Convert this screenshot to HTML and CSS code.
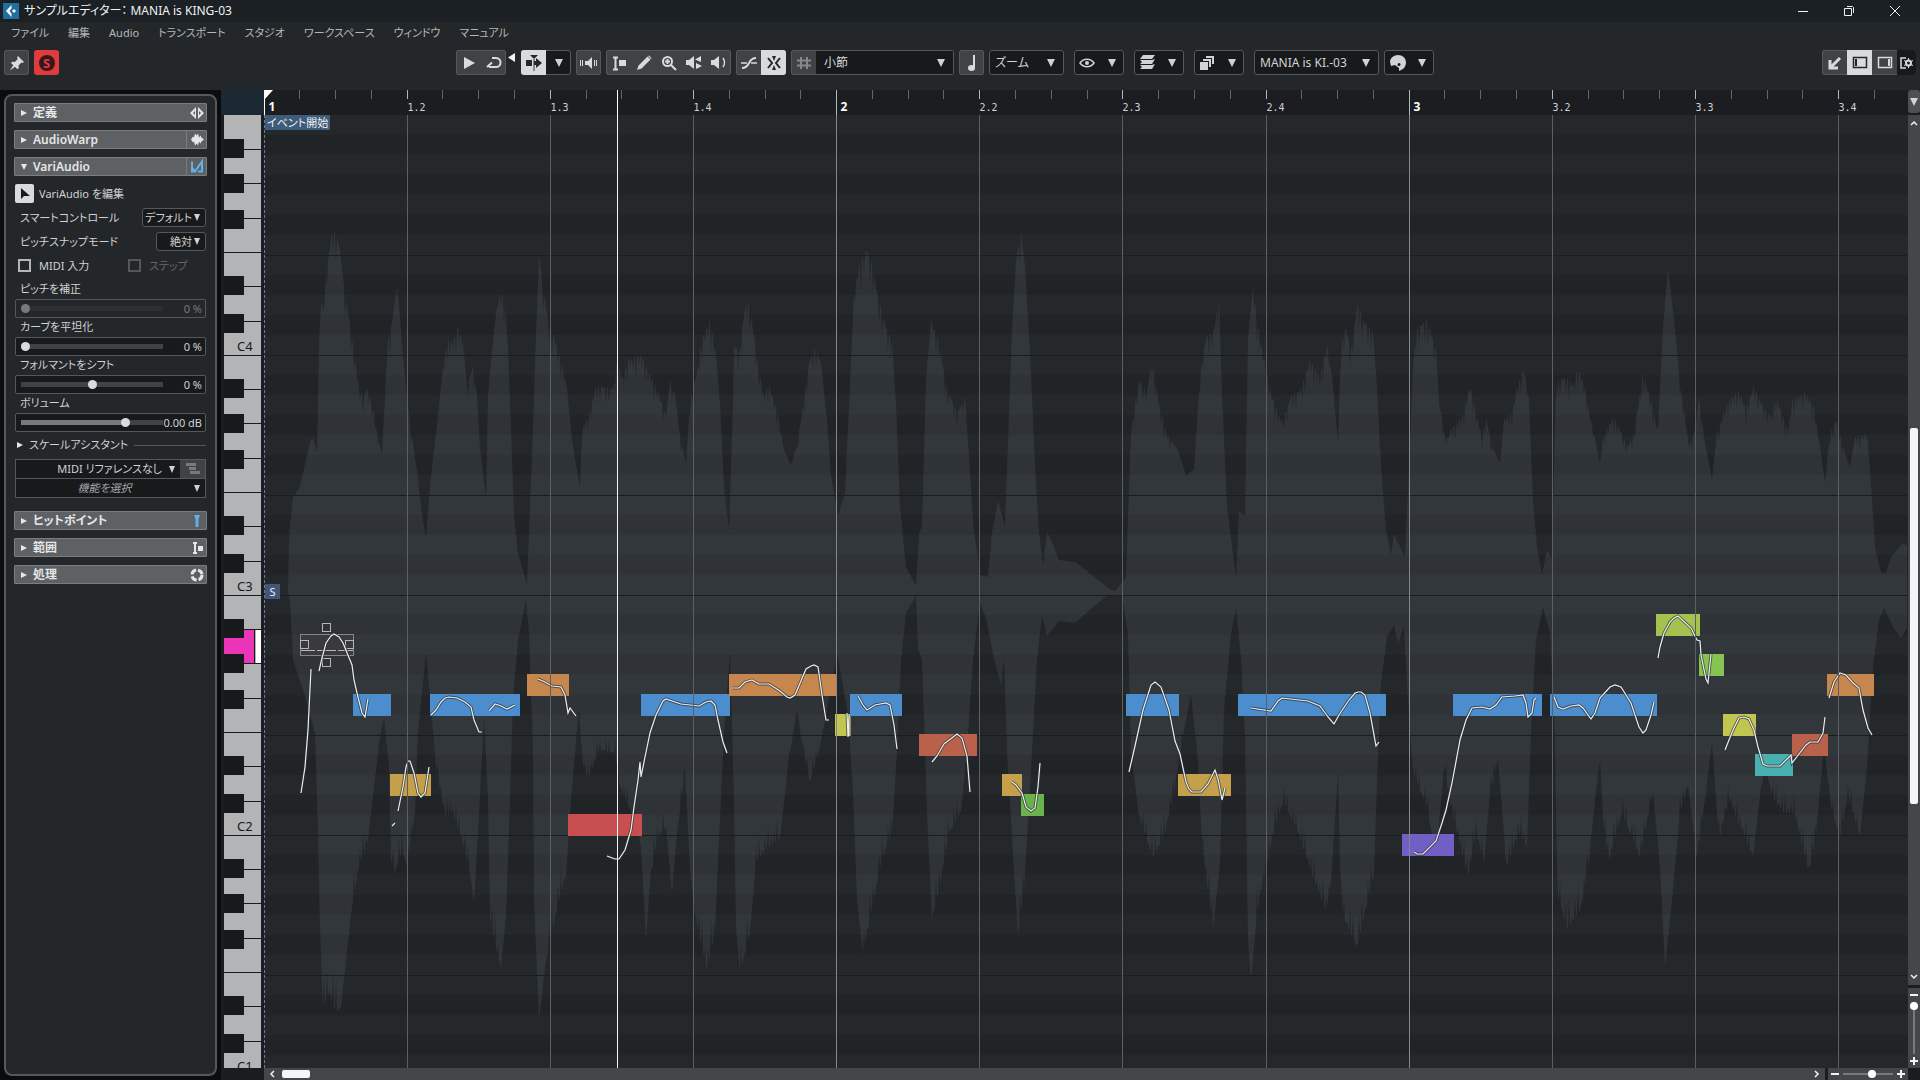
FILE: index.html
```html
<!DOCTYPE html>
<html lang="ja">
<head>
    <meta charset="UTF-8">
    <title>サンプルエディター： MANIA is KING-03</title>
    <link rel="stylesheet" href="styles.css">
</head>
<body>
    <header class="titlebar">
        <svg class="app-icon" width="16" height="16" viewBox="0 0 16 16"><rect width="16" height="16" fill="#1f6f9f"/><path d="M8.500 2 3 8l5.500 6V10.500L6.500 8l2-2.500z" fill="#fff"/><path d="m11 6 2 2-2 2-2-2z" fill="#fff"/></svg>
        <h1>サンプルエディター： MANIA is KING-03</h1>
        <div class="window-buttons">
            <button aria-label="最小化"><svg width="12" height="12"><path d="M1 6.500h10"/></svg></button>
            <button aria-label="元に戻す"><svg width="12" height="12"><path d="M1.500 3.500h7v7h-7zM4 1.500h5.500l1 1V8"/></svg></button>
            <button aria-label="閉じる"><svg width="12" height="12"><path d="m1 1 10 10M11 1 1 11"/></svg></button>
        </div>
    </header>

    <nav class="menubar">
        <a href="#">ファイル</a>
        <a href="#">編集</a>
        <a href="#">Audio</a>
        <a href="#">トランスポート</a>
        <a href="#">スタジオ</a>
        <a href="#">ワークスペース</a>
        <a href="#">ウィンドウ</a>
        <a href="#">マニュアル</a>
    </nav>

    <div class="toolbar">
        <div class="tools-left">
            <div class="group"><button aria-label="ピン"><svg width="16" height="16" viewBox="0 0 16 16"><path d="m9 1 6 6-1.500 1-1-.5-3 3 .3 2.500-1.300 1.300L2 8l1.200-1.300 2.600.3 3-3L8 2.500zM5 9l2 2-6 4.500z"/></svg></button></div>
            <button class="solo" aria-label="ソロ"><span>S</span></button>
        </div>
        <div class="tools-center">
            <div class="group">
                <button aria-label="再生"><svg width="16" height="16" viewBox="0 0 16 16"><path d="M3 2v12l11-6z"/></svg></button>
                <button aria-label="ループ"><svg width="16" height="16" viewBox="0 0 16 16"><path class="line" d="M6 3h4a4.500 4.500 0 0 1 0 9H3M1 12l5-4.500"/></svg></button>
            </div>
            <svg class="divider-arrow" width="15" height="25"><path d="M9 3v9L2 7.500z"/></svg>
            <div class="group combo-group">
                <button class="on" aria-label="オートスクロール"><svg width="16" height="16" viewBox="0 0 16 16"><path d="M0 5h6v6H0zM10 6V3l6 5-6 5v-3H8V6zM4 0h8L9 3H7z"/><path class="line thin" d="M8 3v13" stroke-opacity=".6"/></svg></button>
                <button class="caret" aria-label="オートスクロール設定"></button>
            </div>
            <div class="group mr5"><button aria-label="試聴"><svg width="22" height="16" viewBox="0 0 22 16"><path d="M7 6h3l4-4v12l-4-4H7z"/><path class="line hair" d="M2.500 5v6M4.500 5v6M16.500 5v6M18.500 5v6"/></svg></button></div>
            <div class="group mr5">
                <button aria-label="範囲選択"><svg width="16" height="16" viewBox="0 0 16 16"><path class="line" d="M2 2.500h5M2 14.500h5M4.500 2v12"/><path d="M8 5h7v6H8z"/></svg></button>
                <button aria-label="描画"><svg width="16" height="16" viewBox="0 0 16 16"><path d="m1 15 1.500-4.500L11.500 1.500l3 3-9 9zM12 1l1-.5 2.500 2.500-.5 1z"/></svg></button>
                <button aria-label="ズーム"><svg width="16" height="16" viewBox="0 0 16 16"><circle class="line" cx="6.500" cy="6.500" r="4.500"/><path class="line" d="M4 6.500h5M6.500 4v5M10 10l5 5"/></svg></button>
                <button aria-label="スクラブ"><svg width="16" height="16" viewBox="0 0 16 16"><path d="M0 5h3l5-4v13l-5-4H0zM15 1v6L9 4.500zM10 8v6l6-3z"/></svg></button>
                <button aria-label="再生ツール"><svg width="16" height="16" viewBox="0 0 16 16"><path d="M0 5h3l5-4v13l-5-4H0z"/><path class="line thin" d="M12 3q3 4.500 0 9"/></svg></button>
            </div>
            <div class="group mr5">
                <button aria-label="ゼロクロス"><svg width="18" height="16" viewBox="0 0 18 16"><path class="line" d="M2 13c9 0 5-10 14-10"/><path class="line thin" d="M1 8h6M11 8h6"/></svg></button>
                <button class="on" aria-label="スナップ"><svg width="16" height="16" viewBox="0 0 16 16"><path class="line" d="m2 3 4 5-4 5M14 3l-4 5 4 5"/><path d="M6 1h4L8 6zM6 15h4l-2-5z"/></svg></button>
            </div>
            <div class="group grid-group mr5">
                <button class="dim" aria-label="グリッド"><svg width="16" height="16" viewBox="0 0 16 16"><path class="line" d="M5 2v12M11 2v12M1 5.500h14M1 10.500h14"/></svg></button>
                <label class="combo"><select aria-label="グリッドの種類"><option>小節</option></select></label>
            </div>
            <div class="group mr5"><button aria-label="クオンタイズ"><svg width="16" height="16" viewBox="0 0 16 16"><path class="line" d="M10 0v13"/><ellipse cx="7.500" cy="13" rx="3.500" ry="3"/></svg></button></div>
            <label class="combo boxed zoom-combo"><select aria-label="クオンタイズ値"><option>ズーム</option></select></label>
            <button class="boxed icon-combo caret" aria-label="表示"><svg width="16" height="16" viewBox="0 0 16 16"><path class="line thin" d="M1 8c3.500-5 10.500-5 14 0-3.500 5-10.500 5-14 0z"/><circle cx="8" cy="8" r="2"/></svg></button>
            <button class="boxed icon-combo caret" aria-label="レイヤー"><svg width="16" height="16" viewBox="0 0 16 16"><path d="M4 0h12l-3 4H1zM1 5h12l3-1-3 5H1l2-2zM1 10h12l3-1-3 5H1l2-2z"/></svg></button>
            <button class="boxed icon-combo caret" aria-label="クリップ"><svg width="16" height="16" viewBox="0 0 16 16"><path d="M1 7h8v8H1zM4 6V4h8v8h-2V6zM7 3V1h8v8h-2V3z"/></svg></button>
            <label class="combo boxed clip-combo"><select aria-label="編集中のクリップ"><option>MANIA is KI.-03</option></select></label>
            <button class="boxed icon-combo color-combo caret" aria-label="カラー"><svg width="18" height="18" viewBox="0 0 18 18"><path fill-rule="evenodd" d="M9 1a8 7 0 0 1 8 7c0 3-1 5-3 7l-4 2v-3l-4-3-4 1-1-4c0-4 4-7 8-7zm1 8a1.500 1.500 0 1 0 0 3 1.500 1.500 0 0 0 0-3z"/></svg></button>
        </div>
        <div class="group tools-right">
            <button aria-label="下ゾーン"><svg width="16" height="16" viewBox="0 0 16 16"><path class="line bold" d="M13 3 4 12M3 5v8h8"/></svg></button>
            <button class="on" aria-label="左ゾーン"><svg width="16" height="16" viewBox="0 0 16 16"><path class="line thin" d="M1.500 2.500h13v10h-13z"/><path d="M3 4h2v7H3z"/></svg></button>
            <button aria-label="右ゾーン"><svg width="16" height="16" viewBox="0 0 16 16"><path class="line thin" d="M1.500 2.500h13v10h-13z"/><path d="M11 4h2v7h-2z"/></svg></button>
            <button class="dark" aria-label="設定"><svg width="14" height="14" viewBox="0 0 14 14"><path class="line thin" d="M6 2H1v10h5"/><circle class="line" cx="8.500" cy="7" r="2.500"/><path class="line hair" d="M8.500 2v2M8.500 10v2M4 4.500l2 1M11 8.500l2 1M4 9.500l2-1M11 5.500l2-1"/></svg></button>
        </div>
    </div>

    <main class="workspace">
        <aside class="inspector">
            <div class="panel">
                <button class="section"><i class="tri"></i>定義<svg width="14" height="14" viewBox="0 0 14 14"><path d="M6 1v12L0 7zM8 1v12l6-6z"/><path d="M5 5v4L3 7zM9 5v4l2-2z" fill="#5d6163"/></svg></button>
                <button class="section split"><i class="tri"></i>AudioWarp<svg width="14" height="14" viewBox="0 0 14 14"><path d="M1 7l2-3 1 1 1-4 1.500 2L8 1l1 4 1.500-2 1 2L14 7l-2.500 2-1 2L9 9l-1 4-1.500-2L5 13 4 9l-1 1z"/></svg></button>
                <button class="section split open"><i class="tri"></i>VariAudio<svg class="blue" width="14" height="14" viewBox="0 0 14 14"><path class="line" d="M2 2v10h3L12 2v10H8"/><path d="M2 7v5h5z"/></svg></button>

                <div class="vari">
                    <div class="edit-row">
                        <button class="edit-btn" id="edit" aria-label="VariAudio を編集"><svg width="12" height="12"><path d="M2 0v11l3-3h6z"/></svg></button>
                        <label for="edit">VariAudio を編集</label>
                    </div>
                    <div class="field">
                        <label for="smart">スマートコントロール</label>
                        <span class="combo boxed"><select id="smart" class="w64"><option>デフォルト</option></select></span>
                    </div>
                    <div class="field">
                        <label for="snap">ピッチスナップモード</label>
                        <span class="combo boxed"><select id="snap" class="w50"><option>絶対</option></select></span>
                    </div>
                    <div class="checks">
                        <label><input type="checkbox">MIDI 入力</label>
                        <label class="off"><input type="checkbox" disabled>ステップ</label>
                    </div>

                    <label class="param off" for="pitch">ピッチを補正</label>
                    <div class="slider off"><input type="range" id="pitch" value="0" disabled><output>0 %</output></div>
                    <label class="param" for="curve">カーブを平坦化</label>
                    <div class="slider"><input type="range" id="curve" value="0"><output>0 %</output></div>
                    <label class="param" for="formant">フォルマントをシフト</label>
                    <div class="slider"><input type="range" id="formant" value="50"><output>0 %</output></div>
                    <label class="param" for="volume">ボリューム</label>
                    <div class="slider volume"><input type="range" id="volume" value="75"><output>0.00 dB</output></div>

                    <button class="scale-head"><i class="tri"></i>スケールアシスタント</button>
                    <div class="reference">
                        <label class="combo"><select aria-label="MIDI リファレンス"><option>MIDI リファレンスなし</option></select></label>
                        <button aria-label="リファレンスを表示"><svg width="14" height="12"><path d="M0 0h10v3H0zM3 4h7v3H3zM4 8h10v3H4z"/></svg></button>
                    </div>
                    <label class="combo function"><select aria-label="機能"><option>機能を選択</option></select></label>
                </div>

                <button class="section"><i class="tri"></i>ヒットポイント<svg class="blue" width="14" height="14" viewBox="0 0 14 14"><path d="M4 1h6L8.500 5v8h-3V5z"/></svg></button>
                <button class="section"><i class="tri"></i>範囲<svg width="14" height="14" viewBox="0 0 14 14"><path class="line" d="M3 2h4M3 12h4M5 2v10"/><path d="M8 5h5v5H8z"/></svg></button>
                <button class="section"><i class="tri"></i>処理<svg width="14" height="14" viewBox="0 0 14 14"><circle class="line bold dash" cx="7" cy="7" r="5"/></svg></button>
            </div>
        </aside>

        <section class="editor">
            <div class="corner"></div>
            <svg class="ruler" id="ruler"></svg>
            <button class="ruler-menu caret" aria-label="ルーラー表示"></button>

            <svg class="keyboard">
                <defs>
                    <g id="octave">
                        <path class="key-line" d="M0 34.500h37M0 68.500h37M0 103.500h37M0 137.500h37M0 171.500h37M0 206.500h37M0 240.500h37"/>
                        <path class="black-keys" d="M0 24h20v19H0zM0 59h20v19H0zM0 95h20v19H0zM0 161h20v19H0zM0 199h20v19H0z"/>
                    </g>
                </defs>
                <rect class="whites" width="37" height="100%"/>
                <path class="held" d="M0 515h30v33H0z"/>
                <path class="held-edge" d="M32 515h5v33h-5z"/>
                <path class="key-line" d="M30.500 515v33"/>
                <use href="#octave"/>
                <use href="#octave" y="240"/>
                <use href="#octave" y="480"/>
                <use href="#octave" y="720"/>
                <text x="13" y="236">C4</text>
                <text x="13" y="476">C3</text>
                <text x="13" y="716">C2</text>
                <text x="13" y="956">C1</text>
            </svg>

            <div class="canvas">
                <svg class="wave" id="wave"></svg>
                <span class="tag event-start">イベント開始</span>
                <span class="tag snap-point">S</span>
            </div>

            <div class="vscroll">
                <div class="bar">
                    <button aria-label="上へ"><svg width="8" height="6"><path d="m1 5 3-3 3 3"/></svg></button>
                    <div class="track"><div class="thumb"></div></div>
                    <button aria-label="下へ"><svg width="8" height="6"><path d="m1 1 3 3 3-3"/></svg></button>
                </div>
                <div class="zoom">
                    <button aria-label="縮小"><svg width="8" height="8"><path class="fat" d="M0 4h8"/></svg></button>
                    <input type="range" value="0" aria-label="縦ズーム">
                    <button aria-label="拡大"><svg width="8" height="8"><path class="fat" d="M0 4h8M4 0v8"/></svg></button>
                </div>
            </div>

            <div class="hscroll">
                <div class="bar">
                    <button aria-label="左へ"><svg width="6" height="8"><path d="M5 1 2 4l3 3"/></svg></button>
                    <div class="track"><div class="thumb"></div></div>
                    <button aria-label="右へ"><svg width="6" height="8"><path d="m1 1 3 3-3 3"/></svg></button>
                </div>
                <div class="zoom">
                    <button aria-label="縮小"><svg width="8" height="8"><path class="fat" d="M0 4h8"/></svg></button>
                    <input type="range" value="60" aria-label="横ズーム">
                    <button aria-label="拡大"><svg width="8" height="8"><path class="fat" d="M0 4h8M4 0v8"/></svg></button>
                </div>
            </div>
        </section>
    </main>

    <script src="editor.js"></script>
</body>
</html>
```
FILE: styles.css
```css
* {
    box-sizing: border-box;
}

body {
    margin: 0;
    height: 100vh;
    display: flex;
    flex-direction: column;
    overflow: hidden;
    background: #23272a;
    color: #d0d2d3;
    font-family: "Noto Sans", "Noto Sans CJK JP", sans-serif;
    font-size: 12px;
    line-height: 16px;
    font-feature-settings: "palt";
}

button, select, input {
    margin: 0;
    padding: 0;
    border: 0;
    background: none;
    color: inherit;
    font: inherit;
    font-feature-settings: inherit;
}

button {
    display: flex;
    align-items: center;
    justify-content: center;
}

svg {
    display: block;
    flex: none;
    fill: currentColor;
}

svg .line {
    fill: none;
    stroke: currentColor;
    stroke-width: 2;
}

svg .hair { stroke-width: 1; }
svg .thin { stroke-width: 1.5; }
svg .bold { stroke-width: 3; }
svg .dash { stroke-dasharray: 6 2; }

/* title + menu */
.titlebar {
    display: flex;
    align-items: center;
    height: 22px;
    padding-left: 3px;
    background: #1a2023;
    color: #f0f2f3;
}

.titlebar h1 {
    flex: 1;
    margin: 0 0 0 5px;
    font-size: 12px;
    font-weight: 400;
}

.window-buttons {
    display: flex;
    padding-right: 2px;
}

.window-buttons button {
    width: 46px;
    height: 20px;
}

.window-buttons svg {
    fill: none;
    stroke: #f0f2f3;
}

.menubar {
    display: flex;
    align-items: center;
    gap: 19px;
    height: 22px;
    padding-left: 11px;
}

.menubar a {
    color: #b4b7b9;
    font-size: 11px;
    text-decoration: none;
}

/* toolbar */
.toolbar {
    display: flex;
    justify-content: space-between;
    align-items: flex-start;
    height: 46px;
    padding: 6px 4px 0;
}

.tools-left {
    display: flex;
    gap: 5px;
    width: 64px;
}

.tools-center {
    display: flex;
    height: 25px;
}

.group {
    display: flex;
    height: 25px;
    border-radius: 3px;
    background: #404346;
    box-shadow: inset 0 0 0 1px #54585a;
    color: #d8dadb;
    overflow: hidden;
}

.group button {
    width: 25px;
    height: 25px;
}

.group .on {
    background: #d8dadc;
    color: #23272a;
}

.group .dark {
    width: 19px;
    background: #17191b;
}

.group .dim {
    color: #85888a;
}

.mr5 { margin-right: 5px; }

.solo {
    width: 25px;
    height: 25px;
    border-radius: 3px;
    background: #e13b3d;
}

.solo span {
    width: 16px;
    height: 16px;
    border-radius: 50%;
    background: #36181b;
    color: #e13b3d;
    font-size: 13px;
    font-weight: 700;
    line-height: 16px;
}

.divider-arrow { color: #f0f2f3; }

.combo-group {
    margin-right: 5px;
    background: #17191b;
}

.caret::after, .combo::after {
    content: "";
    width: 0;
    border: 4px solid transparent;
    border-top: 8px solid #d0d2d3;
    border-bottom: 0;
}

.combo {
    position: relative;
    display: flex;
    align-items: center;
    background: #17191b;
}

.combo::after {
    position: absolute;
    right: 8px;
    pointer-events: none;
}

.combo select {
    width: 100%;
    height: 100%;
    appearance: none;
    padding: 0 20px 0 8px;
    outline: 0;
}

.boxed {
    border: 1px solid #54585a;
    border-radius: 3px;
    background: #17191b;
}

.grid-group { width: 163px; }
.grid-group .combo { flex: 1; margin: 1px 1px 1px 0; }
.zoom-combo { width: 75px; margin-right: 10px; }
.zoom-combo select { padding-left: 5px; }
.clip-combo { width: 125px; margin-right: 5px; }
.clip-combo select { padding-left: 5px; padding-right: 16px; }

.icon-combo {
    justify-content: space-between;
    width: 50px;
    margin-right: 10px;
    padding: 0 7px 0 4px;
}

.color-combo { margin-right: 0; }

/* inspector */
.workspace {
    flex: 1;
    display: flex;
    min-height: 0;
    background: #0b0c0d;
}

.inspector {
    width: 221px;
    padding: 4px;
    display: flex;
}

.panel {
    width: 213px;
    padding: 7px 8px;
    border: 2px solid #55585a;
    border-radius: 8px;
    background: #23272a;
    font-size: 11px;
}

.section {
    display: flex;
    justify-content: flex-start;
    width: 193px;
    height: 19px;
    margin-bottom: 8px;
    padding: 0 2px 0 6px;
    border: 1px solid #7a7e80;
    border-radius: 1px;
    background: #5d6163;
    color: #e4e6e7;
    font-size: 12px;
    font-weight: 600;
}

.section svg {
    width: 14px;
    margin-left: auto;
}

.section.split svg {
    box-sizing: content-box;
    height: 17px;
    padding-left: 3px;
    border-left: 1px solid #7a7e80;
}

.blue { color: #62aee6; }

.tri {
    width: 6px;
    height: 6px;
    margin-right: 6px;
    border: 3px solid transparent;
    border-left: 6px solid #e4e6e7;
    border-right: 0;
}

.open .tri {
    border: 3px solid transparent;
    border-top: 6px solid #e4e6e7;
    border-bottom: 0;
}

.vari {
    width: 193px;
    padding: 0 1px;
    margin-bottom: 13px;
}

.edit-row {
    display: flex;
    align-items: center;
    gap: 5px;
    height: 19px;
    margin-bottom: 5px;
}

.edit-btn {
    width: 19px;
    height: 19px;
    border-radius: 2px;
    background: #d8dadc;
    color: #17191b;
}

.field {
    display: flex;
    justify-content: space-between;
    align-items: center;
    height: 19px;
    margin-bottom: 5px;
    padding-left: 5px;
}

.field .combo { height: 19px; }
.field select { padding: 0 13px 0 0; text-align: right; }
.field .w64 { width: 62px; }
.field .w50 { width: 48px; }

.vari .combo::after {
    right: 5px;
    border-width: 7px 3px 0;
}

.checks {
    display: flex;
    height: 19px;
    margin-bottom: 6px;
}

.checks label {
    display: flex;
    align-items: center;
    width: 110px;
    padding-left: 3px;
}

.checks .off {
    width: 78px;
    color: #636668;
}

.checks input {
    appearance: none;
    width: 13px;
    height: 13px;
    margin-right: 8px;
    border: 2px solid #b4b7b9;
}

.checks .off input { border-color: #55585a; }

.param {
    display: block;
    height: 16px;
    margin: 0 0 2px 5px;
}

.slider {
    display: flex;
    align-items: center;
    width: 191px;
    height: 19px;
    margin-bottom: 1px;
    padding: 0 3px 0 5px;
    border: 1px solid #54585a;
    border-radius: 2px;
    background: #17191b;
}

input[type="range"] {
    appearance: none;
    width: 142px;
    height: 8px;
}

.slider input::-webkit-slider-runnable-track {
    height: 5px;
    background: #404346;
}

.slider input::-webkit-slider-thumb {
    appearance: none;
    width: 9px;
    height: 9px;
    margin-top: -2px;
    border-radius: 50%;
    background: #d8dadc;
}

.volume input::-webkit-slider-runnable-track {
    background: linear-gradient(90deg, #77797b 75%, #404346 75%);
}

.slider input { flex: 0 0 142px; }
.slider output { flex: 1; text-align: right; white-space: nowrap; }
.volume output { margin-left: -8px; }
.slider.off { background: none; color: #77797b; }
.slider.off input::-webkit-slider-runnable-track { background: #2c3033; }
.slider.off input::-webkit-slider-thumb { background: #77797b; }

.scale-head {
    width: 100%;
    height: 22px;
    margin: 2px 0 3px;
    padding-left: 2px;
}

.scale-head::after {
    content: "";
    flex: 1;
    margin-left: 6px;
    border-top: 1px solid #54585a;
}

.reference {
    display: flex;
    height: 20px;
    border: 1px solid #54585a;
}

.reference .combo { flex: 1; }
.reference select { text-align: right; padding-right: 18px; }

.reference button {
    width: 25px;
    background: #404346;
    color: #77797b;
}

.function {
    height: 19px;
    border: 1px solid #54585a;
    border-top: 0;
    color: #a4a7a9;
    font-style: italic;
}

.function select { text-align: center; }

/* editor */
.editor {
    flex: 1;
    min-width: 0;
    display: grid;
    grid-template-columns: 43px minmax(0, 1fr) 12px;
    grid-template-rows: 25px minmax(0, 1fr) 12px;
    background: #1a1d20;
}

.corner { background: #1c2832; }

.ruler {
    width: 100%;
    height: 25px;
    background: #1b1d21;
}

.ruler line { stroke: #63676a; }
.ruler .beat { stroke: #b4b7b9; }
.ruler .playhead { stroke: #fff; }

.ruler text {
    fill: #d0d2d3;
    font-family: "DejaVu Sans Mono", monospace;
    font-size: 10px;
}

.ruler .bar-number {
    fill: #fff;
    font-family: "Noto Sans", sans-serif;
    font-size: 12px;
    font-weight: 700;
}

.ruler-menu {
    height: 23px;
    border-radius: 3px;
    background: #4d5053;
}

.keyboard {
    width: 37px;
    height: 100%;
    margin-left: 3px;
}

.keyboard .whites { fill: #b2b4b6; }
.keyboard .key-line { fill: none; stroke: #17191b; }
.keyboard .black-keys { fill: #17191b; }
.keyboard .held { fill: #ea35b8; }
.keyboard .held-edge { fill: #fff; }

.keyboard text {
    fill: #17191b;
    font-size: 13px;
}

/* one gradient period = one octave, B at the top and C at the bottom */
.canvas {
    position: relative;
    overflow: hidden;
    border-left: 1px dashed #6b77a0;
    background: repeating-linear-gradient(#24282b 0 20px, #202427 20px 40px, #24282b 40px 60px, #202427 60px 80px, #24282b 80px 100px, #202427 100px 120px, #24282b 120px 160px, #202427 160px 180px, #24282b 180px 200px, #202427 200px 220px, #24282b 220px 240px);
}

.wave {
    width: 100%;
    height: 100%;
    margin-left: -1px;
}

.wave .envelope { fill: rgba(108, 114, 124, .2); }
.wave .octave-line { stroke: #1a1d20; }
.wave .beat-line { stroke: #5c6063; }
.wave .bar-line { stroke: #85888a; }
.wave .playhead { stroke: #f4f5f6; }

.wave .curve-shadow {
    fill: none;
    stroke: #2b2e33;
    stroke-opacity: .7;
    stroke-width: 3;
}

.wave .curve {
    fill: none;
    stroke: #eceeef;
    stroke-width: 1.2;
}

.wave .selection {
    fill: #3a3a3c;
    stroke: #85888a;
}

.wave .handle {
    fill: none;
    stroke: #b4b7b9;
}

.tag {
    position: absolute;
    left: 0;
    padding: 0 2px;
    color: #f0f2f3;
    font-size: 11px;
    line-height: 15px;
    background: #3e5b7a;
}

.event-start { top: 0; }

.snap-point {
    top: 469px;
    width: 15px;
    padding: 0;
    text-align: center;
    background: #43567a;
}

/* scrollbars */
.bar, .zoom {
    display: flex;
    align-items: center;
    background: #454649;
}

.bar svg, .zoom svg {
    fill: none;
    stroke: #f0f2f3;
    stroke-width: 1.5;
}

.fat { stroke-width: 2; }

.thumb {
    border-radius: 2px;
    background: #f4f5f6;
}

.track { flex: 1; }

.vscroll {
    grid-area: 2 / 3;
    display: flex;
    flex-direction: column;
    gap: 3px;
}

.vscroll .bar {
    flex: 1;
    flex-direction: column;
}

.vscroll .bar button { height: 16px; }

.vscroll .thumb {
    width: 8px;
    flex: 376;
}

.vscroll .track {
    display: flex;
    flex-direction: column;
}

/* space above, thumb and space below share the track 297 : 376 : 165 */
.vscroll .track::before { content: ""; flex: 297; }
.vscroll .track::after { content: ""; flex: 165; }

.vscroll .zoom {
    flex-direction: column;
    justify-content: space-between;
    height: 80px;
    padding: 3px 0;
}

.vscroll input {
    writing-mode: vertical-lr;
    width: 8px;
    height: 52px;
}

.hscroll {
    grid-area: 3 / 2 / 4 / 4;
    display: flex;
    gap: 3px;
    padding-right: 12px;
}

.hscroll .bar { flex: 1; }
.hscroll .bar button { width: 16px; }

.hscroll .thumb {
    width: 28px;
    height: 8px;
    margin-left: 2px;
}

.hscroll .zoom {
    width: 80px;
    padding: 0 3px;
    justify-content: space-between;
}

.hscroll input { width: 50px; }

.zoom input {
    background: linear-gradient(#77797b, #77797b) center / 100% 2px no-repeat;
}

.vscroll .zoom input {
    background-size: 2px 100%;
}

.zoom input::-webkit-slider-thumb {
    appearance: none;
    width: 8px;
    height: 8px;
    border-radius: 50%;
    background: #fff;
}
```
FILE: editor.js
```js
const NS = 'http://www.w3.org/2000/svg';
const ORIGIN_X = 264;
const ORIGIN_Y = 115;
const BEAT = 143.15;

const ruler = document.getElementById('ruler');
const wave = document.getElementById('wave');

function add(parent, tag, attrs, text) {
  const el = document.createElementNS(NS, tag);
  for (const key in attrs) el.setAttribute(key, attrs[key]);
  if (text) el.textContent = text;
  parent.appendChild(el);
  return el;
}

// x,y pairs of both halves of the waveform
const upper = [288,592,289,536,293,498,300,486,305,464,312,434,317,453,319,347,321,298,324,312,326,271,330,250,332,230,335,231,340,250,345,295,350,323,355,360,359,388,364,398,366,386,372,402,377,433,382,455,385,395,388,340,392,323,395,298,397,286,400,319,403,357,410,422,417,471,422,515,426,538,429,498,433,457,438,416,443,367,447,340,453,342,458,326,463,343,467,385,473,367,477,395,480,447,486,498,488,395,492,350,497,305,501,290,505,305,508,347,511,429,514,515,518,553,527,584,529,533,533,429,536,333,539,254,543,288,548,319,555,340,562,364,567,388,572,440,580,488,582,429,590,412,596,385,613,389,617,360,622,378,628,360,642,355,648,371,657,388,666,416,670,381,675,395,680,436,686,464,690,402,697,371,702,340,710,320,716,353,720,404,724,486,729,529,733,404,734,343,739,353,743,322,747,297,752,322,757,358,763,394,769,384,778,414,784,450,791,465,797,445,804,399,809,363,815,348,821,363,827,419,831,475,838,516,845,493,850,384,854,292,859,266,867,248,872,264,878,297,886,328,892,340,896,404,900,506,906,567,916,586,919,534,922,526,926,379,931,320,939,343,947,389,957,412,965,399,969,455,973,521,980,575,988,577,992,532,998,501,1005,526,1009,414,1012,328,1016,261,1021,231,1025,266,1030,353,1035,465,1039,532,1043,565,1047,532,1052,542,1059,560,1075,562,1092,575,1108,588,1115,591,1126,578,1131,430,1139,379,1147,391,1152,361,1159,404,1167,435,1178,450,1186,475,1194,470,1200,373,1206,338,1214,330,1219,297,1222,394,1227,506,1236,577,1239,511,1245,516,1248,338,1253,287,1259,333,1265,363,1271,394,1282,422,1292,394,1300,391,1310,360,1320,377,1327,343,1332,377,1338,443,1341,343,1346,328,1351,350,1358,302,1363,320,1373,333,1377,387,1381,467,1386,530,1391,555,1394,535,1405,557,1409,467,1413,367,1416,330,1427,320,1436,350,1439,400,1446,443,1450,430,1462,417,1470,385,1476,413,1482,437,1486,417,1492,447,1500,463,1504,420,1512,413,1517,387,1524,367,1529,400,1533,500,1537,547,1542,575,1547,550,1552,558,1556,383,1566,377,1573,385,1578,368,1585,387,1591,420,1600,463,1604,433,1614,417,1628,447,1634,433,1643,373,1650,397,1658,430,1663,327,1668,268,1674,320,1680,380,1689,447,1695,430,1699,397,1705,443,1712,480,1717,433,1727,403,1739,390,1746,410,1754,385,1761,403,1771,417,1776,397,1788,430,1792,400,1805,392,1814,407,1820,447,1825,483,1830,433,1836,420,1844,450,1850,467,1855,437,1867,433,1871,483,1875,547,1881,573,1886,573,1891,557,1903,543,1910,548];
const lower = [288,595,290,600,293,660,304,693,315,733,318,833,320,927,323,1010,329,993,336,1012,341,1007,346,960,352,907,359,867,368,840,374,787,379,743,384,717,389,767,391,860,395,873,402,850,407,867,415,813,418,733,426,653,431,707,436,767,445,817,452,812,463,843,470,873,474,903,478,833,484,717,488,800,490,917,497,953,501,967,506,917,510,800,513,700,518,640,526,600,529,633,533,750,534,900,539,1020,545,967,552,933,559,900,566,877,571,800,579,707,582,760,588,780,599,750,615,753,620,787,631,813,641,847,646,940,650,883,657,840,666,827,672,893,677,833,685,773,690,867,695,917,707,970,715,933,718,860,724,733,730,653,734,800,736,927,740,973,750,933,756,863,767,848,780,838,788,766,797,710,804,756,810,782,818,756,827,710,837,654,841,674,848,715,853,792,857,899,863,955,871,914,882,858,892,833,897,751,901,659,906,613,916,596,918,649,922,659,927,812,932,922,941,879,949,833,961,812,967,751,973,659,980,603,986,618,994,659,1001,685,1004,659,1007,751,1012,838,1018,935,1024,889,1031,771,1037,659,1042,616,1047,636,1059,621,1075,623,1092,608,1108,595,1122,595,1128,634,1131,751,1139,817,1153,858,1165,833,1175,787,1184,731,1191,695,1198,761,1202,843,1213,930,1220,863,1224,710,1231,634,1236,608,1241,659,1245,736,1248,940,1251,981,1257,914,1267,863,1276,822,1284,802,1300,838,1312,875,1326,912,1331,883,1338,773,1340,867,1343,917,1357,947,1365,913,1374,873,1377,783,1381,683,1387,637,1394,625,1398,643,1404,627,1408,700,1413,773,1427,807,1436,860,1444,767,1452,813,1468,877,1476,833,1484,863,1490,793,1498,760,1504,833,1506,867,1519,833,1527,847,1531,733,1536,640,1543,607,1550,633,1555,733,1557,893,1567,928,1581,910,1589,860,1595,800,1600,760,1604,833,1609,860,1622,813,1640,857,1653,793,1660,867,1665,967,1672,900,1680,813,1688,785,1697,860,1705,800,1712,743,1719,840,1729,800,1753,857,1761,787,1766,773,1774,800,1784,813,1794,813,1809,873,1816,833,1824,747,1832,813,1840,837,1848,797,1860,837,1867,767,1873,667,1879,620,1884,608,1893,627,1901,638,1910,623];

// walks the envelope one pixel at a time and roughens its flat parts
function trace(points) {
  const out = [];
  for (let i = 0; i < points.length - 2; i += 2) {
    const [x1, y1, x2, y2] = points.slice(i, i + 4);
    const slope = (y2 - y1) / (x2 - x1);
    for (let x = x1; x < x2; x++) {
      let y = y1 + slope * (x - x1);
      const amp = y - 593;
      if (x % 3 === 0 && Math.abs(slope) < 8 && Math.abs(amp) > 150) {
        y -= amp * 0.09 * Math.abs(Math.sin(x * 12.9));
      }
      out.push(x + ' ' + y.toFixed(1));
    }
  }
  return out;
}

const world = add(wave, 'g', { transform: `translate(${-ORIGIN_X} ${-ORIGIN_Y})` });
add(world, 'path', { class: 'envelope', d: 'M' + trace(upper).join('L') + 'L' + trace(lower).reverse().join('L') + 'Z' });

// C and F boundaries of each octave
[255.5, 355.5, 495.5, 595.5, 735.5, 835.5, 975.5].forEach(y => {
  add(world, 'line', { class: 'octave-line', x1: 264, x2: 4000, y1: y, y2: y });
});

const width = ruler.getBoundingClientRect().width;
for (let i = 0; i * BEAT < width; i++) {
  const x = Math.floor(i * BEAT) + 0.5;
  const bar = i % 4 === 0;
  if (i > 0) add(wave, 'line', { class: bar ? 'bar-line' : 'beat-line', x1: x, x2: x, y1: 0, y2: '100%' });
  add(ruler, 'line', { class: 'beat', x1: x, x2: x, y1: 0, y2: bar ? 25 : 9 });
  for (let q = 1; q < 4; q++) {
    const t = Math.floor((i + q / 4) * BEAT) + 0.5;
    add(ruler, 'line', { x1: t, x2: t, y1: 0, y2: 9 });
  }
  const label = Math.floor(i / 4) + 1;
  if (bar) add(ruler, 'text', { class: 'bar-number', x: x + 4, y: 21 }, String(label));
  else add(ruler, 'text', { x: x, y: 21 }, label + '.' + (i % 4 + 1));
}
add(ruler, 'path', { d: 'M0 0h9L1 9v16H0z', fill: '#fff' });

const colors = {
  blue: '#4b8dcd', gold: '#c4a04b', orange: '#c6874e', red: '#c84f50', rust: '#b9614b',
  yellow: '#c3c551', green: '#69b24c', lime: '#a3c24f', leaf: '#86c350', teal: '#49b0b0', purple: '#725fc6'
};

// start, end, top, colour
const notes = [
  [353, 391, 694, 'blue'], [390, 431, 774, 'gold'], [430, 520, 694, 'blue'], [527, 569, 674, 'orange'],
  [568, 642, 814, 'red'], [641, 730, 694, 'blue'], [729, 836, 674, 'orange'], [835, 851, 714, 'yellow'],
  [850, 902, 694, 'blue'], [919, 977, 734, 'rust'], [1002, 1022, 774, 'gold'], [1021, 1044, 794, 'green'],
  [1126, 1179, 694, 'blue'], [1178, 1231, 774, 'gold'], [1238, 1386, 694, 'blue'], [1402, 1454, 834, 'purple'],
  [1453, 1542, 694, 'blue'], [1550, 1657, 694, 'blue'], [1656, 1700, 614, 'lime'], [1699, 1724, 654, 'leaf'],
  [1723, 1756, 714, 'yellow'], [1755, 1793, 754, 'teal'], [1792, 1828, 734, 'rust'], [1827, 1874, 674, 'orange']
];
notes.forEach(([x1, x2, y, color]) => {
  add(world, 'rect', { x: x1, y: y, width: x2 - x1, height: 22, fill: colors[color] });
});

add(world, 'rect', { class: 'selection', x: 300.5, y: 634.5, width: 53, height: 21 });
add(world, 'path', { class: 'handle', d: 'M301 650.5h14M317 650.5h19M338 650.5h15' });
[[322, 623], [300, 640], [345, 640], [322, 658]].forEach(([x, y]) => {
  add(world, 'rect', { class: 'handle', x: x + 0.5, y: y + 0.5, width: 8, height: 8 });
});

const curves = [
  '311,669 308,730 305,767 301,793',
  '319,671 322,658 326,643 331,636 334,634 339,637 343,643 352,665 354,680 357,693 362,713 365,717 368,699',
  '392,826 395,823',
  '398,811 403,787 406,767 408,761 410,761 414,773 418,793 421,797 425,793 429,767',
  '431,715 436,710 441,702 445,698 449,697 457,698 465,702 471,707 474,720 479,732 482,732',
  '489,711 495,704 501,706 507,709 515,705',
  '538,679 545,682 552,686 561,687 565,695 568,713 570,708 576,716',
  '607,856 615,859 619,859 625,850 631,830 634,807 638,780 640,762 641,777 645,757 650,733 656,715 663,701 666,699 681,704 699,706 706,702 711,701 715,705 718,720 723,742 727,753',
  '733,688 739,688 745,682 752,680 759,684 769,684 780,691 787,697 790,698 795,695 806,669 811,666 814,665 818,667 822,695 826,720 829,720',
  '847,713 848,737 849,715 849,736',
  '858,696 863,705 867,710 875,705 886,703 890,705 894,725 897,749',
  '932,762 937,756 944,744 957,734 962,738 967,756 970,792',
  '1012,782 1016,785 1022,793 1026,807 1031,811 1035,808 1038,787 1040,763',
  '1129,772 1135,746 1143,710 1151,685 1155,682 1161,687 1169,710 1175,741 1180,754 1186,782 1189,789 1192,792 1201,792 1208,784 1215,770 1218,779 1222,800 1225,788',
  '1251,708 1271,711 1278,701 1282,698 1308,701 1320,706 1328,717 1334,724 1339,715 1349,700 1355,693 1358,692 1361,692 1365,695 1370,713 1376,746 1379,742',
  '1414,852 1417,854 1423,854 1436,841 1442,823 1446,810 1452,783 1460,740 1466,720 1472,708 1482,707 1490,709 1496,705 1502,697 1515,696 1523,695 1526,703 1528,717 1532,713 1534,700 1536,698',
  '1554,697 1558,707 1563,709 1571,706 1579,705 1583,708 1591,719 1595,713 1600,698 1610,687 1615,685 1621,687 1631,703 1639,727 1643,733 1646,730 1651,715 1654,702',
  '1658,658 1660,647 1664,633 1670,622 1674,618 1678,616 1691,628 1697,640 1700,641 1701,655 1706,679 1708,683 1711,654',
  '1725,750 1733,730 1739,718 1744,717 1749,719 1754,730 1758,747 1763,764 1767,766 1780,766 1788,758 1791,755 1792,763 1806,745 1810,742 1818,742 1823,733 1825,717',
  '1829,698 1834,682 1840,673 1846,675 1852,682 1859,688 1863,710 1868,728 1872,735'
];
curves.forEach(points => {
  add(world, 'polyline', { class: 'curve-shadow', points });
  add(world, 'polyline', { class: 'curve', points });
});

const playX = 617.5 - ORIGIN_X;
add(wave, 'line', { class: 'playhead', x1: playX, x2: playX, y1: 0, y2: '100%' });
add(ruler, 'line', { class: 'playhead', x1: playX, x2: playX, y1: 0, y2: 25 });
```
